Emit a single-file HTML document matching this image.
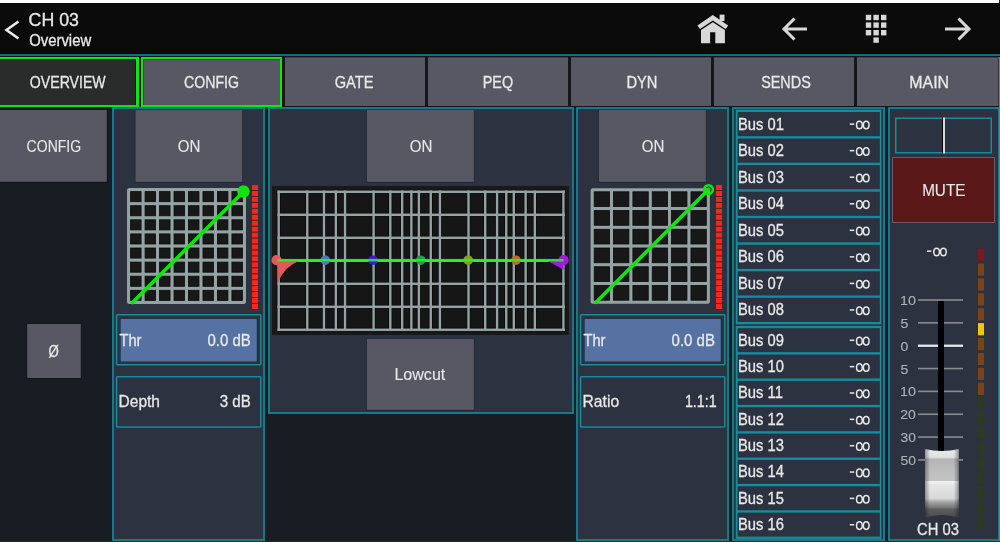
<!DOCTYPE html>
<html><head><meta charset="utf-8"><style>
html,body{margin:0;padding:0;width:1000px;height:542px;overflow:hidden;background:#181c23}
svg{display:block;font-family:"Liberation Sans",sans-serif}
</style></head><body>
<svg width="1000" height="542" viewBox="0 0 1000 542">
<rect x="0" y="0" width="1000" height="542" fill="#181c23" />
<rect x="0" y="0" width="999" height="3" fill="#ffffff" />
<rect x="0" y="541" width="1000" height="1" fill="#2b2b2b" />
<rect x="0" y="3" width="1000" height="50" fill="#0b0b0b" />
<rect x="0" y="53" width="1000" height="1" fill="#050208" />
<rect x="0" y="54" width="1000" height="2" fill="#0c7282" />
<rect x="0" y="56" width="1000" height="51" fill="#15171c" />
<polyline points="18.5,21.5 6.5,30 18.5,38.5" fill="none" stroke="#ececec" stroke-width="2.6"/>
<path d="M719.6,14.6 L724.5,14.6 L724.5,21 L719.6,21 Z" fill="#d8d8d8"/>
<path d="M712.8,15 L728.2,25.4 L725.6,29.1 L712.8,20.5 L700,29.1 L697.4,25.4 Z" fill="#d8d8d8"/>
<path d="M701,30.1 L712.8,22.2 L724.9,30.1 L724.9,43.3 L715.3,43.3 L715.3,32.2 L710.1,32.2 L710.1,43.3 L701,43.3 Z" fill="#d8d8d8"/>
<path d="M807,29 L784.5,29 M794.5,18.5 L784,29 L794.5,39.5" fill="none" stroke="#d8d8d8" stroke-width="3"/>
<path d="M945,29 L968.5,29 M958.5,18.5 L969,29 L958.5,39.5" fill="none" stroke="#d8d8d8" stroke-width="3"/>
<rect x="865.8" y="14.8" width="5.4" height="5.4" fill="#d8d8d8" />
<rect x="865.8" y="22.4" width="5.4" height="5.4" fill="#d8d8d8" />
<rect x="865.8" y="30.0" width="5.4" height="5.4" fill="#d8d8d8" />
<rect x="873.4" y="14.8" width="5.4" height="5.4" fill="#d8d8d8" />
<rect x="873.4" y="22.4" width="5.4" height="5.4" fill="#d8d8d8" />
<rect x="873.4" y="30.0" width="5.4" height="5.4" fill="#d8d8d8" />
<rect x="881.0" y="14.8" width="5.4" height="5.4" fill="#d8d8d8" />
<rect x="881.0" y="22.4" width="5.4" height="5.4" fill="#d8d8d8" />
<rect x="881.0" y="30.0" width="5.4" height="5.4" fill="#d8d8d8" />
<rect x="873.4" y="37.4" width="5.4" height="5.4" fill="#d8d8d8" />
<rect x="0" y="57" width="139" height="50" fill="#0ee60e" />
<rect x="0" y="59" width="136" height="46" fill="#1e0a24" />
<rect x="0" y="60" width="135" height="45" fill="#2a2c2c" />
<rect x="141" y="57" width="141" height="50" fill="#0ee60e" />
<rect x="143" y="59" width="137" height="46" fill="#3c2c4c" />
<rect x="144" y="60" width="136" height="45" fill="#585864" />
<rect x="285" y="57" width="140" height="49" fill="#585864" />
<rect x="285" y="57" width="140" height="1" fill="#403e4a" />
<rect x="285" y="58" width="140" height="1" fill="#5e5e6a" />
<rect x="428" y="57" width="140" height="49" fill="#585864" />
<rect x="428" y="57" width="140" height="1" fill="#403e4a" />
<rect x="428" y="58" width="140" height="1" fill="#5e5e6a" />
<rect x="571" y="57" width="140" height="49" fill="#585864" />
<rect x="571" y="57" width="140" height="1" fill="#403e4a" />
<rect x="571" y="58" width="140" height="1" fill="#5e5e6a" />
<rect x="714" y="57" width="140" height="49" fill="#585864" />
<rect x="714" y="57" width="140" height="1" fill="#403e4a" />
<rect x="714" y="58" width="140" height="1" fill="#5e5e6a" />
<rect x="857" y="57" width="141.5" height="49" fill="#585864" />
<rect x="857" y="57" width="141.5" height="1" fill="#403e4a" />
<rect x="857" y="58" width="141.5" height="1" fill="#5e5e6a" />
<rect x="0" y="110" width="107.8" height="73" fill="#12151b" />
<rect x="0" y="110" width="106.8" height="71.8" fill="#585864" />
<rect x="26.5" y="323.5" width="55" height="55.5" fill="#12151b" />
<rect x="27.2" y="324" width="53.6" height="54" fill="#585864" />
<rect x="112" y="107" width="153" height="434" fill="#127a8a" />
<rect x="114" y="109" width="149" height="430" fill="#2c3240" />
<rect x="134.8" y="110" width="108" height="73" fill="#252a36" />
<rect x="135.6" y="110" width="106.6" height="71.8" fill="#585864" />
<rect x="127" y="188" width="119" height="116" rx="2.5" fill="#93a2a2"/>
<rect x="130.60" y="191.60" width="10.47" height="10.10" fill="#181818" stroke="#0b0b0b" stroke-width="0.8"/>
<rect x="130.60" y="205.70" width="10.47" height="10.10" fill="#181818" stroke="#0b0b0b" stroke-width="0.8"/>
<rect x="130.60" y="219.80" width="10.47" height="10.10" fill="#181818" stroke="#0b0b0b" stroke-width="0.8"/>
<rect x="130.60" y="233.90" width="10.47" height="10.10" fill="#181818" stroke="#0b0b0b" stroke-width="0.8"/>
<rect x="130.60" y="248.00" width="10.47" height="10.10" fill="#181818" stroke="#0b0b0b" stroke-width="0.8"/>
<rect x="130.60" y="262.10" width="10.47" height="10.10" fill="#181818" stroke="#0b0b0b" stroke-width="0.8"/>
<rect x="130.60" y="276.20" width="10.47" height="10.10" fill="#181818" stroke="#0b0b0b" stroke-width="0.8"/>
<rect x="130.60" y="290.30" width="10.47" height="10.10" fill="#181818" stroke="#0b0b0b" stroke-width="0.8"/>
<rect x="145.07" y="191.60" width="10.47" height="10.10" fill="#181818" stroke="#0b0b0b" stroke-width="0.8"/>
<rect x="145.07" y="205.70" width="10.47" height="10.10" fill="#181818" stroke="#0b0b0b" stroke-width="0.8"/>
<rect x="145.07" y="219.80" width="10.47" height="10.10" fill="#181818" stroke="#0b0b0b" stroke-width="0.8"/>
<rect x="145.07" y="233.90" width="10.47" height="10.10" fill="#181818" stroke="#0b0b0b" stroke-width="0.8"/>
<rect x="145.07" y="248.00" width="10.47" height="10.10" fill="#181818" stroke="#0b0b0b" stroke-width="0.8"/>
<rect x="145.07" y="262.10" width="10.47" height="10.10" fill="#181818" stroke="#0b0b0b" stroke-width="0.8"/>
<rect x="145.07" y="276.20" width="10.47" height="10.10" fill="#181818" stroke="#0b0b0b" stroke-width="0.8"/>
<rect x="145.07" y="290.30" width="10.47" height="10.10" fill="#181818" stroke="#0b0b0b" stroke-width="0.8"/>
<rect x="159.55" y="191.60" width="10.47" height="10.10" fill="#181818" stroke="#0b0b0b" stroke-width="0.8"/>
<rect x="159.55" y="205.70" width="10.47" height="10.10" fill="#181818" stroke="#0b0b0b" stroke-width="0.8"/>
<rect x="159.55" y="219.80" width="10.47" height="10.10" fill="#181818" stroke="#0b0b0b" stroke-width="0.8"/>
<rect x="159.55" y="233.90" width="10.47" height="10.10" fill="#181818" stroke="#0b0b0b" stroke-width="0.8"/>
<rect x="159.55" y="248.00" width="10.47" height="10.10" fill="#181818" stroke="#0b0b0b" stroke-width="0.8"/>
<rect x="159.55" y="262.10" width="10.47" height="10.10" fill="#181818" stroke="#0b0b0b" stroke-width="0.8"/>
<rect x="159.55" y="276.20" width="10.47" height="10.10" fill="#181818" stroke="#0b0b0b" stroke-width="0.8"/>
<rect x="159.55" y="290.30" width="10.47" height="10.10" fill="#181818" stroke="#0b0b0b" stroke-width="0.8"/>
<rect x="174.03" y="191.60" width="10.47" height="10.10" fill="#181818" stroke="#0b0b0b" stroke-width="0.8"/>
<rect x="174.03" y="205.70" width="10.47" height="10.10" fill="#181818" stroke="#0b0b0b" stroke-width="0.8"/>
<rect x="174.03" y="219.80" width="10.47" height="10.10" fill="#181818" stroke="#0b0b0b" stroke-width="0.8"/>
<rect x="174.03" y="233.90" width="10.47" height="10.10" fill="#181818" stroke="#0b0b0b" stroke-width="0.8"/>
<rect x="174.03" y="248.00" width="10.47" height="10.10" fill="#181818" stroke="#0b0b0b" stroke-width="0.8"/>
<rect x="174.03" y="262.10" width="10.47" height="10.10" fill="#181818" stroke="#0b0b0b" stroke-width="0.8"/>
<rect x="174.03" y="276.20" width="10.47" height="10.10" fill="#181818" stroke="#0b0b0b" stroke-width="0.8"/>
<rect x="174.03" y="290.30" width="10.47" height="10.10" fill="#181818" stroke="#0b0b0b" stroke-width="0.8"/>
<rect x="188.50" y="191.60" width="10.47" height="10.10" fill="#181818" stroke="#0b0b0b" stroke-width="0.8"/>
<rect x="188.50" y="205.70" width="10.47" height="10.10" fill="#181818" stroke="#0b0b0b" stroke-width="0.8"/>
<rect x="188.50" y="219.80" width="10.47" height="10.10" fill="#181818" stroke="#0b0b0b" stroke-width="0.8"/>
<rect x="188.50" y="233.90" width="10.47" height="10.10" fill="#181818" stroke="#0b0b0b" stroke-width="0.8"/>
<rect x="188.50" y="248.00" width="10.47" height="10.10" fill="#181818" stroke="#0b0b0b" stroke-width="0.8"/>
<rect x="188.50" y="262.10" width="10.47" height="10.10" fill="#181818" stroke="#0b0b0b" stroke-width="0.8"/>
<rect x="188.50" y="276.20" width="10.47" height="10.10" fill="#181818" stroke="#0b0b0b" stroke-width="0.8"/>
<rect x="188.50" y="290.30" width="10.47" height="10.10" fill="#181818" stroke="#0b0b0b" stroke-width="0.8"/>
<rect x="202.97" y="191.60" width="10.47" height="10.10" fill="#181818" stroke="#0b0b0b" stroke-width="0.8"/>
<rect x="202.97" y="205.70" width="10.47" height="10.10" fill="#181818" stroke="#0b0b0b" stroke-width="0.8"/>
<rect x="202.97" y="219.80" width="10.47" height="10.10" fill="#181818" stroke="#0b0b0b" stroke-width="0.8"/>
<rect x="202.97" y="233.90" width="10.47" height="10.10" fill="#181818" stroke="#0b0b0b" stroke-width="0.8"/>
<rect x="202.97" y="248.00" width="10.47" height="10.10" fill="#181818" stroke="#0b0b0b" stroke-width="0.8"/>
<rect x="202.97" y="262.10" width="10.47" height="10.10" fill="#181818" stroke="#0b0b0b" stroke-width="0.8"/>
<rect x="202.97" y="276.20" width="10.47" height="10.10" fill="#181818" stroke="#0b0b0b" stroke-width="0.8"/>
<rect x="202.97" y="290.30" width="10.47" height="10.10" fill="#181818" stroke="#0b0b0b" stroke-width="0.8"/>
<rect x="217.45" y="191.60" width="10.47" height="10.10" fill="#181818" stroke="#0b0b0b" stroke-width="0.8"/>
<rect x="217.45" y="205.70" width="10.47" height="10.10" fill="#181818" stroke="#0b0b0b" stroke-width="0.8"/>
<rect x="217.45" y="219.80" width="10.47" height="10.10" fill="#181818" stroke="#0b0b0b" stroke-width="0.8"/>
<rect x="217.45" y="233.90" width="10.47" height="10.10" fill="#181818" stroke="#0b0b0b" stroke-width="0.8"/>
<rect x="217.45" y="248.00" width="10.47" height="10.10" fill="#181818" stroke="#0b0b0b" stroke-width="0.8"/>
<rect x="217.45" y="262.10" width="10.47" height="10.10" fill="#181818" stroke="#0b0b0b" stroke-width="0.8"/>
<rect x="217.45" y="276.20" width="10.47" height="10.10" fill="#181818" stroke="#0b0b0b" stroke-width="0.8"/>
<rect x="217.45" y="290.30" width="10.47" height="10.10" fill="#181818" stroke="#0b0b0b" stroke-width="0.8"/>
<rect x="231.92" y="191.60" width="10.47" height="10.10" fill="#181818" stroke="#0b0b0b" stroke-width="0.8"/>
<rect x="231.92" y="205.70" width="10.47" height="10.10" fill="#181818" stroke="#0b0b0b" stroke-width="0.8"/>
<rect x="231.92" y="219.80" width="10.47" height="10.10" fill="#181818" stroke="#0b0b0b" stroke-width="0.8"/>
<rect x="231.92" y="233.90" width="10.47" height="10.10" fill="#181818" stroke="#0b0b0b" stroke-width="0.8"/>
<rect x="231.92" y="248.00" width="10.47" height="10.10" fill="#181818" stroke="#0b0b0b" stroke-width="0.8"/>
<rect x="231.92" y="262.10" width="10.47" height="10.10" fill="#181818" stroke="#0b0b0b" stroke-width="0.8"/>
<rect x="231.92" y="276.20" width="10.47" height="10.10" fill="#181818" stroke="#0b0b0b" stroke-width="0.8"/>
<rect x="231.92" y="290.30" width="10.47" height="10.10" fill="#181818" stroke="#0b0b0b" stroke-width="0.8"/>
<line x1="132.5" y1="302.5" x2="244" y2="191.2" stroke="#0ee60e" stroke-width="3.6" stroke-linecap="round"/>
<circle cx="243.5" cy="191.5" r="6.2" fill="#0ee60e"/>
<rect x="252" y="185" width="6" height="124.95" fill="#2a2428" />
<rect x="252" y="185.0" width="6" height="5" fill="#ff2418" />
<rect x="252" y="190.95" width="6" height="5" fill="#ff2418" />
<rect x="252" y="196.9" width="6" height="5" fill="#ff2418" />
<rect x="252" y="202.85" width="6" height="5" fill="#ff2418" />
<rect x="252" y="208.8" width="6" height="5" fill="#ff2418" />
<rect x="252" y="214.75" width="6" height="5" fill="#ff2418" />
<rect x="252" y="220.7" width="6" height="5" fill="#ff2418" />
<rect x="252" y="226.65" width="6" height="5" fill="#ff2418" />
<rect x="252" y="232.6" width="6" height="5" fill="#ff2418" />
<rect x="252" y="238.55" width="6" height="5" fill="#ff2418" />
<rect x="252" y="244.5" width="6" height="5" fill="#ff2418" />
<rect x="252" y="250.45" width="6" height="5" fill="#ff2418" />
<rect x="252" y="256.4" width="6" height="5" fill="#ff2418" />
<rect x="252" y="262.35" width="6" height="5" fill="#ff2418" />
<rect x="252" y="268.3" width="6" height="5" fill="#ff2418" />
<rect x="252" y="274.25" width="6" height="5" fill="#ff2418" />
<rect x="252" y="280.2" width="6" height="5" fill="#ff2418" />
<rect x="252" y="286.15" width="6" height="5" fill="#ff2418" />
<rect x="252" y="292.1" width="6" height="5" fill="#ff2418" />
<rect x="252" y="298.05" width="6" height="5" fill="#ff2418" />
<rect x="252" y="304.0" width="6" height="5" fill="#ff2418" />
<rect x="115.8" y="314" width="145.8" height="51.5" rx="1.5" fill="#168c9e"/>
<rect x="117.3" y="315.5" width="142.8" height="48.5" fill="#2c3240"/>
<rect x="120.1" y="318.2" width="137.20000000000002" height="43.5" fill="#1c2030"/>
<rect x="120.6" y="318.8" width="136.20000000000002" height="42.7" fill="#5672a3"/>
<rect x="115.8" y="376" width="145.8" height="51.8" rx="1.5" fill="#168c9e"/>
<rect x="117.3" y="377.5" width="142.8" height="48.8" fill="#2c3240"/>
<rect x="268" y="107" width="306" height="307" fill="#127a8a" />
<rect x="270" y="109" width="302" height="303" fill="#2c3240" />
<rect x="366.3" y="110" width="108.2" height="73" fill="#252a36" />
<rect x="367" y="110" width="106.8" height="71.8" fill="#585864" />
<rect x="272" y="186" width="297" height="149" fill="#191919" />
<rect x="277.5" y="190.5" width="287.5" height="140.5" fill="#161616"/>
<rect x="276.70" y="190.5" width="4.0" height="140.5" fill="#0a0a0a"/>
<rect x="305.27" y="190.5" width="4.0" height="140.5" fill="#0a0a0a"/>
<rect x="321.98" y="190.5" width="4.0" height="140.5" fill="#0a0a0a"/>
<rect x="333.84" y="190.5" width="4.0" height="140.5" fill="#0a0a0a"/>
<rect x="343.03" y="190.5" width="4.0" height="140.5" fill="#0a0a0a"/>
<rect x="371.60" y="190.5" width="4.0" height="140.5" fill="#0a0a0a"/>
<rect x="388.31" y="190.5" width="4.0" height="140.5" fill="#0a0a0a"/>
<rect x="400.17" y="190.5" width="4.0" height="140.5" fill="#0a0a0a"/>
<rect x="409.36" y="190.5" width="4.0" height="140.5" fill="#0a0a0a"/>
<rect x="416.88" y="190.5" width="4.0" height="140.5" fill="#0a0a0a"/>
<rect x="428.74" y="190.5" width="4.0" height="140.5" fill="#0a0a0a"/>
<rect x="437.93" y="190.5" width="4.0" height="140.5" fill="#0a0a0a"/>
<rect x="466.50" y="190.5" width="4.0" height="140.5" fill="#0a0a0a"/>
<rect x="483.21" y="190.5" width="4.0" height="140.5" fill="#0a0a0a"/>
<rect x="495.07" y="190.5" width="4.0" height="140.5" fill="#0a0a0a"/>
<rect x="504.26" y="190.5" width="4.0" height="140.5" fill="#0a0a0a"/>
<rect x="511.78" y="190.5" width="4.0" height="140.5" fill="#0a0a0a"/>
<rect x="523.64" y="190.5" width="4.0" height="140.5" fill="#0a0a0a"/>
<rect x="532.83" y="190.5" width="4.0" height="140.5" fill="#0a0a0a"/>
<rect x="561.40" y="190.5" width="4.0" height="140.5" fill="#0a0a0a"/>
<rect x="277.5" y="189.80" width="287.5" height="4.0" fill="#0a0a0a"/>
<rect x="277.5" y="212.80" width="287.5" height="4.0" fill="#0a0a0a"/>
<rect x="277.5" y="235.80" width="287.5" height="4.0" fill="#0a0a0a"/>
<rect x="277.5" y="258.80" width="287.5" height="4.0" fill="#0a0a0a"/>
<rect x="277.5" y="281.80" width="287.5" height="4.0" fill="#0a0a0a"/>
<rect x="277.5" y="304.80" width="287.5" height="4.0" fill="#0a0a0a"/>
<rect x="277.5" y="327.80" width="287.5" height="4.0" fill="#0a0a0a"/>
<rect x="277.50" y="190.5" width="2.4" height="140.5" fill="#93a2a2"/>
<rect x="306.07" y="190.5" width="2.4" height="140.5" fill="#93a2a2"/>
<rect x="322.78" y="190.5" width="2.4" height="140.5" fill="#93a2a2"/>
<rect x="334.64" y="190.5" width="2.4" height="140.5" fill="#93a2a2"/>
<rect x="343.83" y="190.5" width="2.4" height="140.5" fill="#93a2a2"/>
<rect x="372.40" y="190.5" width="2.4" height="140.5" fill="#93a2a2"/>
<rect x="389.11" y="190.5" width="2.4" height="140.5" fill="#93a2a2"/>
<rect x="400.97" y="190.5" width="2.4" height="140.5" fill="#93a2a2"/>
<rect x="410.16" y="190.5" width="2.4" height="140.5" fill="#93a2a2"/>
<rect x="417.68" y="190.5" width="2.4" height="140.5" fill="#93a2a2"/>
<rect x="429.54" y="190.5" width="2.4" height="140.5" fill="#93a2a2"/>
<rect x="438.73" y="190.5" width="2.4" height="140.5" fill="#93a2a2"/>
<rect x="467.30" y="190.5" width="2.4" height="140.5" fill="#93a2a2"/>
<rect x="484.01" y="190.5" width="2.4" height="140.5" fill="#93a2a2"/>
<rect x="495.87" y="190.5" width="2.4" height="140.5" fill="#93a2a2"/>
<rect x="505.06" y="190.5" width="2.4" height="140.5" fill="#93a2a2"/>
<rect x="512.58" y="190.5" width="2.4" height="140.5" fill="#93a2a2"/>
<rect x="524.44" y="190.5" width="2.4" height="140.5" fill="#93a2a2"/>
<rect x="533.63" y="190.5" width="2.4" height="140.5" fill="#93a2a2"/>
<rect x="562.20" y="190.5" width="2.4" height="140.5" fill="#93a2a2"/>
<rect x="277.5" y="190.55" width="287.5" height="2.5" fill="#93a2a2"/>
<rect x="277.5" y="213.55" width="287.5" height="2.5" fill="#93a2a2"/>
<rect x="277.5" y="236.55" width="287.5" height="2.5" fill="#93a2a2"/>
<rect x="277.5" y="259.55" width="287.5" height="2.5" fill="#93a2a2"/>
<rect x="277.5" y="282.55" width="287.5" height="2.5" fill="#93a2a2"/>
<rect x="277.5" y="305.55" width="287.5" height="2.5" fill="#93a2a2"/>
<rect x="277.5" y="328.55" width="287.5" height="2.5" fill="#93a2a2"/>
<path d="M277.5,259.5 L299,259.5 L298.5,261.3 Q285,266 277.5,283 Z" fill="#e05a5a"/>
<path d="M546,260.5 L563.5,260.5 L563.5,270 C557,266 551,262.5 546,260.5 Z" fill="#a418e0"/>
<circle cx="276.6" cy="260.2" r="5.1" fill="#e05a5a" />
<circle cx="325.3" cy="260.2" r="4.8" fill="#4a74c4" />
<circle cx="373" cy="260.2" r="4.8" fill="#3c14e4" />
<circle cx="420.8" cy="260.2" r="4.8" fill="#1e9e3c" />
<circle cx="468.2" cy="260.2" r="4.8" fill="#8c9c1c" />
<circle cx="516" cy="260.2" r="4.8" fill="#c46428" />
<circle cx="563.6" cy="260.2" r="5.1" fill="#a418e0" />
<rect x="277.5" y="258.9" width="286" height="2.6" fill="#2af02a" fill-opacity="0.88"/>
<rect x="366.3" y="338.5" width="108.2" height="72.3" fill="#252a36" />
<rect x="367" y="339" width="106.8" height="70.8" fill="#585864" />
<rect x="576" y="107" width="153" height="434" fill="#127a8a" />
<rect x="578" y="109" width="149" height="430" fill="#2c3240" />
<rect x="598.3" y="110" width="108.2" height="73" fill="#252a36" />
<rect x="599" y="110" width="106.8" height="71.8" fill="#585864" />
<rect x="590.6" y="188.2" width="119.3" height="115.6" rx="2.5" fill="#93a2a2"/>
<rect x="594.20" y="191.80" width="15.35" height="14.73" fill="#181818" stroke="#0b0b0b" stroke-width="0.8"/>
<rect x="594.20" y="210.53" width="15.35" height="14.73" fill="#181818" stroke="#0b0b0b" stroke-width="0.8"/>
<rect x="594.20" y="229.27" width="15.35" height="14.73" fill="#181818" stroke="#0b0b0b" stroke-width="0.8"/>
<rect x="594.20" y="248.00" width="15.35" height="14.73" fill="#181818" stroke="#0b0b0b" stroke-width="0.8"/>
<rect x="594.20" y="266.73" width="15.35" height="14.73" fill="#181818" stroke="#0b0b0b" stroke-width="0.8"/>
<rect x="594.20" y="285.47" width="15.35" height="14.73" fill="#181818" stroke="#0b0b0b" stroke-width="0.8"/>
<rect x="613.55" y="191.80" width="15.35" height="14.73" fill="#181818" stroke="#0b0b0b" stroke-width="0.8"/>
<rect x="613.55" y="210.53" width="15.35" height="14.73" fill="#181818" stroke="#0b0b0b" stroke-width="0.8"/>
<rect x="613.55" y="229.27" width="15.35" height="14.73" fill="#181818" stroke="#0b0b0b" stroke-width="0.8"/>
<rect x="613.55" y="248.00" width="15.35" height="14.73" fill="#181818" stroke="#0b0b0b" stroke-width="0.8"/>
<rect x="613.55" y="266.73" width="15.35" height="14.73" fill="#181818" stroke="#0b0b0b" stroke-width="0.8"/>
<rect x="613.55" y="285.47" width="15.35" height="14.73" fill="#181818" stroke="#0b0b0b" stroke-width="0.8"/>
<rect x="632.90" y="191.80" width="15.35" height="14.73" fill="#181818" stroke="#0b0b0b" stroke-width="0.8"/>
<rect x="632.90" y="210.53" width="15.35" height="14.73" fill="#181818" stroke="#0b0b0b" stroke-width="0.8"/>
<rect x="632.90" y="229.27" width="15.35" height="14.73" fill="#181818" stroke="#0b0b0b" stroke-width="0.8"/>
<rect x="632.90" y="248.00" width="15.35" height="14.73" fill="#181818" stroke="#0b0b0b" stroke-width="0.8"/>
<rect x="632.90" y="266.73" width="15.35" height="14.73" fill="#181818" stroke="#0b0b0b" stroke-width="0.8"/>
<rect x="632.90" y="285.47" width="15.35" height="14.73" fill="#181818" stroke="#0b0b0b" stroke-width="0.8"/>
<rect x="652.25" y="191.80" width="15.35" height="14.73" fill="#181818" stroke="#0b0b0b" stroke-width="0.8"/>
<rect x="652.25" y="210.53" width="15.35" height="14.73" fill="#181818" stroke="#0b0b0b" stroke-width="0.8"/>
<rect x="652.25" y="229.27" width="15.35" height="14.73" fill="#181818" stroke="#0b0b0b" stroke-width="0.8"/>
<rect x="652.25" y="248.00" width="15.35" height="14.73" fill="#181818" stroke="#0b0b0b" stroke-width="0.8"/>
<rect x="652.25" y="266.73" width="15.35" height="14.73" fill="#181818" stroke="#0b0b0b" stroke-width="0.8"/>
<rect x="652.25" y="285.47" width="15.35" height="14.73" fill="#181818" stroke="#0b0b0b" stroke-width="0.8"/>
<rect x="671.60" y="191.80" width="15.35" height="14.73" fill="#181818" stroke="#0b0b0b" stroke-width="0.8"/>
<rect x="671.60" y="210.53" width="15.35" height="14.73" fill="#181818" stroke="#0b0b0b" stroke-width="0.8"/>
<rect x="671.60" y="229.27" width="15.35" height="14.73" fill="#181818" stroke="#0b0b0b" stroke-width="0.8"/>
<rect x="671.60" y="248.00" width="15.35" height="14.73" fill="#181818" stroke="#0b0b0b" stroke-width="0.8"/>
<rect x="671.60" y="266.73" width="15.35" height="14.73" fill="#181818" stroke="#0b0b0b" stroke-width="0.8"/>
<rect x="671.60" y="285.47" width="15.35" height="14.73" fill="#181818" stroke="#0b0b0b" stroke-width="0.8"/>
<rect x="690.95" y="191.80" width="15.35" height="14.73" fill="#181818" stroke="#0b0b0b" stroke-width="0.8"/>
<rect x="690.95" y="210.53" width="15.35" height="14.73" fill="#181818" stroke="#0b0b0b" stroke-width="0.8"/>
<rect x="690.95" y="229.27" width="15.35" height="14.73" fill="#181818" stroke="#0b0b0b" stroke-width="0.8"/>
<rect x="690.95" y="248.00" width="15.35" height="14.73" fill="#181818" stroke="#0b0b0b" stroke-width="0.8"/>
<rect x="690.95" y="266.73" width="15.35" height="14.73" fill="#181818" stroke="#0b0b0b" stroke-width="0.8"/>
<rect x="690.95" y="285.47" width="15.35" height="14.73" fill="#181818" stroke="#0b0b0b" stroke-width="0.8"/>
<line x1="596.1" y1="302.29999999999995" x2="708.5" y2="189.5" stroke="#0ee60e" stroke-width="3.6" stroke-linecap="round"/>
<circle cx="708.5" cy="189.5" r="4.3" fill="none" stroke="#0ee60e" stroke-width="2.6"/>
<rect x="716" y="185" width="6" height="124.95" fill="#2a2428" />
<rect x="716" y="185.0" width="6" height="5" fill="#ff2418" />
<rect x="716" y="190.95" width="6" height="5" fill="#ff2418" />
<rect x="716" y="196.9" width="6" height="5" fill="#ff2418" />
<rect x="716" y="202.85" width="6" height="5" fill="#ff2418" />
<rect x="716" y="208.8" width="6" height="5" fill="#ff2418" />
<rect x="716" y="214.75" width="6" height="5" fill="#ff2418" />
<rect x="716" y="220.7" width="6" height="5" fill="#ff2418" />
<rect x="716" y="226.65" width="6" height="5" fill="#ff2418" />
<rect x="716" y="232.6" width="6" height="5" fill="#ff2418" />
<rect x="716" y="238.55" width="6" height="5" fill="#ff2418" />
<rect x="716" y="244.5" width="6" height="5" fill="#ff2418" />
<rect x="716" y="250.45" width="6" height="5" fill="#ff2418" />
<rect x="716" y="256.4" width="6" height="5" fill="#ff2418" />
<rect x="716" y="262.35" width="6" height="5" fill="#ff2418" />
<rect x="716" y="268.3" width="6" height="5" fill="#ff2418" />
<rect x="716" y="274.25" width="6" height="5" fill="#ff2418" />
<rect x="716" y="280.2" width="6" height="5" fill="#ff2418" />
<rect x="716" y="286.15" width="6" height="5" fill="#ff2418" />
<rect x="716" y="292.1" width="6" height="5" fill="#ff2418" />
<rect x="716" y="298.05" width="6" height="5" fill="#ff2418" />
<rect x="716" y="304.0" width="6" height="5" fill="#ff2418" />
<rect x="579.8" y="314" width="145.8" height="51.5" rx="1.5" fill="#168c9e"/>
<rect x="581.3" y="315.5" width="142.8" height="48.5" fill="#2c3240"/>
<rect x="584.0999999999999" y="318.2" width="137.20000000000002" height="43.5" fill="#1c2030"/>
<rect x="584.5999999999999" y="318.8" width="136.20000000000002" height="42.7" fill="#5672a3"/>
<rect x="579.8" y="376" width="145.8" height="51.8" rx="1.5" fill="#168c9e"/>
<rect x="581.3" y="377.5" width="142.8" height="48.8" fill="#2c3240"/>
<rect x="732" y="107" width="153" height="434" fill="#127a8a" />
<rect x="734" y="109" width="149" height="430" fill="#2c3240" />
<rect x="735.8" y="109.70" width="145.6" height="214.60" fill="#168c9e"/>
<rect x="737.6" y="112.00" width="142.2" height="24.15" fill="#2c3240"/>
<rect x="849.8" y="123.35" width="4.4" height="1.5" fill="#e8e8e8"/>
<ellipse cx="859.40" cy="124.95" rx="2.85" ry="3.8" fill="none" stroke="#e8e8e8" stroke-width="1.5"/>
<ellipse cx="866.20" cy="124.95" rx="2.85" ry="3.8" fill="none" stroke="#e8e8e8" stroke-width="1.5"/>
<rect x="737.6" y="138.55" width="142.2" height="24.15" fill="#2c3240"/>
<rect x="849.8" y="149.90" width="4.4" height="1.5" fill="#e8e8e8"/>
<ellipse cx="859.40" cy="151.50" rx="2.85" ry="3.8" fill="none" stroke="#e8e8e8" stroke-width="1.5"/>
<ellipse cx="866.20" cy="151.50" rx="2.85" ry="3.8" fill="none" stroke="#e8e8e8" stroke-width="1.5"/>
<rect x="737.6" y="165.10" width="142.2" height="24.15" fill="#2c3240"/>
<rect x="849.8" y="176.45" width="4.4" height="1.5" fill="#e8e8e8"/>
<ellipse cx="859.40" cy="178.05" rx="2.85" ry="3.8" fill="none" stroke="#e8e8e8" stroke-width="1.5"/>
<ellipse cx="866.20" cy="178.05" rx="2.85" ry="3.8" fill="none" stroke="#e8e8e8" stroke-width="1.5"/>
<rect x="737.6" y="191.65" width="142.2" height="24.15" fill="#2c3240"/>
<rect x="849.8" y="203.00" width="4.4" height="1.5" fill="#e8e8e8"/>
<ellipse cx="859.40" cy="204.60" rx="2.85" ry="3.8" fill="none" stroke="#e8e8e8" stroke-width="1.5"/>
<ellipse cx="866.20" cy="204.60" rx="2.85" ry="3.8" fill="none" stroke="#e8e8e8" stroke-width="1.5"/>
<rect x="737.6" y="218.20" width="142.2" height="24.15" fill="#2c3240"/>
<rect x="849.8" y="229.55" width="4.4" height="1.5" fill="#e8e8e8"/>
<ellipse cx="859.40" cy="231.15" rx="2.85" ry="3.8" fill="none" stroke="#e8e8e8" stroke-width="1.5"/>
<ellipse cx="866.20" cy="231.15" rx="2.85" ry="3.8" fill="none" stroke="#e8e8e8" stroke-width="1.5"/>
<rect x="737.6" y="244.75" width="142.2" height="24.15" fill="#2c3240"/>
<rect x="849.8" y="256.10" width="4.4" height="1.5" fill="#e8e8e8"/>
<ellipse cx="859.40" cy="257.70" rx="2.85" ry="3.8" fill="none" stroke="#e8e8e8" stroke-width="1.5"/>
<ellipse cx="866.20" cy="257.70" rx="2.85" ry="3.8" fill="none" stroke="#e8e8e8" stroke-width="1.5"/>
<rect x="737.6" y="271.30" width="142.2" height="24.15" fill="#2c3240"/>
<rect x="849.8" y="282.65" width="4.4" height="1.5" fill="#e8e8e8"/>
<ellipse cx="859.40" cy="284.25" rx="2.85" ry="3.8" fill="none" stroke="#e8e8e8" stroke-width="1.5"/>
<ellipse cx="866.20" cy="284.25" rx="2.85" ry="3.8" fill="none" stroke="#e8e8e8" stroke-width="1.5"/>
<rect x="737.6" y="297.85" width="142.2" height="24.15" fill="#2c3240"/>
<rect x="849.8" y="309.20" width="4.4" height="1.5" fill="#e8e8e8"/>
<ellipse cx="859.40" cy="310.80" rx="2.85" ry="3.8" fill="none" stroke="#e8e8e8" stroke-width="1.5"/>
<ellipse cx="866.20" cy="310.80" rx="2.85" ry="3.8" fill="none" stroke="#e8e8e8" stroke-width="1.5"/>
<rect x="735.8" y="325.90" width="145.6" height="213.00" fill="#168c9e"/>
<rect x="737.6" y="328.20" width="142.2" height="23.95" fill="#2c3240"/>
<rect x="849.8" y="339.55" width="4.4" height="1.5" fill="#e8e8e8"/>
<ellipse cx="859.40" cy="341.15" rx="2.85" ry="3.8" fill="none" stroke="#e8e8e8" stroke-width="1.5"/>
<ellipse cx="866.20" cy="341.15" rx="2.85" ry="3.8" fill="none" stroke="#e8e8e8" stroke-width="1.5"/>
<rect x="737.6" y="354.55" width="142.2" height="23.95" fill="#2c3240"/>
<rect x="849.8" y="365.90" width="4.4" height="1.5" fill="#e8e8e8"/>
<ellipse cx="859.40" cy="367.50" rx="2.85" ry="3.8" fill="none" stroke="#e8e8e8" stroke-width="1.5"/>
<ellipse cx="866.20" cy="367.50" rx="2.85" ry="3.8" fill="none" stroke="#e8e8e8" stroke-width="1.5"/>
<rect x="737.6" y="380.90" width="142.2" height="23.95" fill="#2c3240"/>
<rect x="849.8" y="392.25" width="4.4" height="1.5" fill="#e8e8e8"/>
<ellipse cx="859.40" cy="393.85" rx="2.85" ry="3.8" fill="none" stroke="#e8e8e8" stroke-width="1.5"/>
<ellipse cx="866.20" cy="393.85" rx="2.85" ry="3.8" fill="none" stroke="#e8e8e8" stroke-width="1.5"/>
<rect x="737.6" y="407.25" width="142.2" height="23.95" fill="#2c3240"/>
<rect x="849.8" y="418.60" width="4.4" height="1.5" fill="#e8e8e8"/>
<ellipse cx="859.40" cy="420.20" rx="2.85" ry="3.8" fill="none" stroke="#e8e8e8" stroke-width="1.5"/>
<ellipse cx="866.20" cy="420.20" rx="2.85" ry="3.8" fill="none" stroke="#e8e8e8" stroke-width="1.5"/>
<rect x="737.6" y="433.60" width="142.2" height="23.95" fill="#2c3240"/>
<rect x="849.8" y="444.95" width="4.4" height="1.5" fill="#e8e8e8"/>
<ellipse cx="859.40" cy="446.55" rx="2.85" ry="3.8" fill="none" stroke="#e8e8e8" stroke-width="1.5"/>
<ellipse cx="866.20" cy="446.55" rx="2.85" ry="3.8" fill="none" stroke="#e8e8e8" stroke-width="1.5"/>
<rect x="737.6" y="459.95" width="142.2" height="23.95" fill="#2c3240"/>
<rect x="849.8" y="471.30" width="4.4" height="1.5" fill="#e8e8e8"/>
<ellipse cx="859.40" cy="472.90" rx="2.85" ry="3.8" fill="none" stroke="#e8e8e8" stroke-width="1.5"/>
<ellipse cx="866.20" cy="472.90" rx="2.85" ry="3.8" fill="none" stroke="#e8e8e8" stroke-width="1.5"/>
<rect x="737.6" y="486.30" width="142.2" height="23.95" fill="#2c3240"/>
<rect x="849.8" y="497.65" width="4.4" height="1.5" fill="#e8e8e8"/>
<ellipse cx="859.40" cy="499.25" rx="2.85" ry="3.8" fill="none" stroke="#e8e8e8" stroke-width="1.5"/>
<ellipse cx="866.20" cy="499.25" rx="2.85" ry="3.8" fill="none" stroke="#e8e8e8" stroke-width="1.5"/>
<rect x="737.6" y="512.65" width="142.2" height="23.95" fill="#2c3240"/>
<rect x="849.8" y="524.00" width="4.4" height="1.5" fill="#e8e8e8"/>
<ellipse cx="859.40" cy="525.60" rx="2.85" ry="3.8" fill="none" stroke="#e8e8e8" stroke-width="1.5"/>
<ellipse cx="866.20" cy="525.60" rx="2.85" ry="3.8" fill="none" stroke="#e8e8e8" stroke-width="1.5"/>
<rect x="888" y="107" width="112" height="434" fill="#127a8a" />
<rect x="890" y="109" width="108" height="430" fill="#2c3240" />
<rect x="999" y="57" width="1" height="484" fill="#7e7a80" />
<rect x="895.75" y="118.25" width="95.5" height="34.5" fill="none" stroke="#168c9e" stroke-width="1.5"/>
<rect x="942" y="117.5" width="1" height="36" fill="#05050a" />
<rect x="943" y="117.5" width="2" height="36" fill="#d8d8d8" />
<rect x="892" y="157" width="103" height="66" fill="#6a5c62" />
<rect x="893" y="158" width="101" height="64" fill="#5a1818" />
<rect x="927" y="250.40" width="4.4" height="1.5" fill="#e8e8e8"/>
<ellipse cx="936.60" cy="252.00" rx="2.85" ry="3.8" fill="none" stroke="#e8e8e8" stroke-width="1.5"/>
<ellipse cx="943.40" cy="252.00" rx="2.85" ry="3.8" fill="none" stroke="#e8e8e8" stroke-width="1.5"/>
<rect x="918" y="299.2" width="45" height="1.6" fill="#8a8c8e" />
<rect x="918" y="322.05" width="45" height="1.6" fill="#8a8c8e" />
<rect x="918" y="344.2" width="45" height="3" fill="#0a0a20" />
<rect x="918" y="344.5" width="45" height="2.4" fill="#e8e8f0" />
<rect x="918" y="367.75" width="45" height="1.6" fill="#8a8c8e" />
<rect x="918" y="390.6" width="45" height="1.6" fill="#8a8c8e" />
<rect x="918" y="413.45" width="45" height="1.6" fill="#8a8c8e" />
<rect x="918" y="436.3" width="45" height="1.6" fill="#8a8c8e" />
<rect x="918" y="459.15" width="45" height="1.6" fill="#8a8c8e" />
<rect x="938" y="301" width="6" height="150" fill="#000000" />
<rect x="978" y="248.6" width="6" height="12.2" fill="#7a1a1a" />
<rect x="978" y="263.5" width="6" height="12.2" fill="#7a4418" />
<rect x="978" y="278.4" width="6" height="12.2" fill="#7a4418" />
<rect x="978" y="293.3" width="6" height="12.2" fill="#7a4418" />
<rect x="978" y="308.2" width="6" height="12.2" fill="#7a4418" />
<rect x="978" y="323.1" width="6" height="12.2" fill="#f0c810" />
<rect x="978" y="338.0" width="6" height="12.2" fill="#7a4418" />
<rect x="978" y="352.9" width="6" height="12.2" fill="#7a4418" />
<rect x="978" y="367.8" width="6" height="12.2" fill="#7a4418" />
<rect x="978" y="382.7" width="6" height="12.2" fill="#7a4418" />
<rect x="978" y="397.6" width="6" height="12.2" fill="#2c3a1e" />
<rect x="978" y="412.5" width="6" height="12.2" fill="#2c3a1e" />
<rect x="978" y="427.4" width="6" height="12.2" fill="#2c3a1e" />
<rect x="978" y="442.3" width="6" height="12.2" fill="#2c3a1e" />
<rect x="978" y="457.2" width="6" height="12.2" fill="#2c3a1e" />
<rect x="978" y="472.1" width="6" height="12.2" fill="#2c3a1e" />
<rect x="978" y="487.0" width="6" height="12.2" fill="#2c3a1e" />
<rect x="978" y="501.9" width="6" height="12.2" fill="#2c3a1e" />
<rect x="978" y="516.8" width="6" height="12.2" fill="#2c3a1e" />
<defs><linearGradient id="kg" x1="0" y1="0" x2="0" y2="1">
<stop offset="0" stop-color="#c8c8c8"/><stop offset="0.03" stop-color="#e8e8e8"/>
<stop offset="0.12" stop-color="#e0e0e0"/><stop offset="0.15" stop-color="#b4b4b4"/>
<stop offset="0.3" stop-color="#bdbdbd"/><stop offset="0.46" stop-color="#c2c2c2"/><stop offset="0.475" stop-color="#f4f4f4"/>
<stop offset="0.52" stop-color="#e6e6e6"/><stop offset="0.72" stop-color="#d8d8d8"/>
<stop offset="0.77" stop-color="#a8a8a8"/><stop offset="0.85" stop-color="#7a7a7a"/>
<stop offset="0.88" stop-color="#5e5e5e"/><stop offset="1" stop-color="#4c4c4c"/></linearGradient>
<linearGradient id="kh" x1="0" y1="0" x2="1" y2="0">
<stop offset="0" stop-color="#000" stop-opacity="0.35"/><stop offset="0.15" stop-color="#000" stop-opacity="0"/>
<stop offset="0.85" stop-color="#000" stop-opacity="0"/><stop offset="1" stop-color="#000" stop-opacity="0.35"/></linearGradient></defs>
<path d="M925,449 Q941.9,453 958.8,449 L958.8,517.5 Q941.9,512.5 925,517.5 Z" fill="url(#kg)"/>
<path d="M925,449 Q941.9,453 958.8,449 L958.8,517.5 Q941.9,512.5 925,517.5 Z" fill="url(#kh)"/>
<g style="will-change:transform"><text transform="translate(28.60,25.60) scale(1.0157,1)" font-size="17.5" fill="#e8e8e8" stroke="#e8e8e8" stroke-width="0.3">CH 03</text>
<text transform="translate(29.20,45.60) scale(0.9293,1)" font-size="16" fill="#e8e8e8" stroke="#e8e8e8" stroke-width="0.3">Overview</text>
<text transform="translate(29.83,87.90) scale(0.8729,1)" font-size="16.2" fill="#e8e8e8" stroke="#e8e8e8" stroke-width="0.3">OVERVIEW</text>
<text transform="translate(184.08,87.90) scale(0.8727,1)" font-size="16.2" fill="#e8e8e8" stroke="#e8e8e8" stroke-width="0.3">CONFIG</text>
<text transform="translate(334.66,87.90) scale(0.9038,1)" font-size="16.2" fill="#e8e8e8" stroke="#e8e8e8" stroke-width="0.3">GATE</text>
<text transform="translate(482.72,87.90) scale(0.8908,1)" font-size="16.2" fill="#e8e8e8" stroke="#e8e8e8" stroke-width="0.3">PEQ</text>
<text transform="translate(626.40,87.90) scale(0.9064,1)" font-size="16.2" fill="#e8e8e8" stroke="#e8e8e8" stroke-width="0.3">DYN</text>
<text transform="translate(761.14,87.90) scale(0.8908,1)" font-size="16.2" fill="#e8e8e8" stroke="#e8e8e8" stroke-width="0.3">SENDS</text>
<text transform="translate(909.29,87.90) scale(0.9828,1)" font-size="16.2" fill="#e8e8e8" stroke="#e8e8e8" stroke-width="0.3">MAIN</text>
<text transform="translate(26.59,151.60) scale(0.8367,1)" font-size="16.8" fill="#e8e8e8" stroke="#e8e8e8" stroke-width="0.12">CONFIG</text>
<text transform="translate(48.44,357.20) scale(0.8281,1)" font-size="16" fill="#e8e8e8" stroke="#e8e8e8" stroke-width="0.3">Ø</text>
<text transform="translate(177.78,151.80) scale(0.8987,1)" font-size="16.8" fill="#e8e8e8" stroke="#e8e8e8" stroke-width="0.12">ON</text>
<text transform="translate(119.47,346.00) scale(0.8719,1)" font-size="16.8" fill="#e8e8e8" stroke="#e8e8e8" stroke-width="0.3">Thr</text>
<text transform="translate(207.41,346.00) scale(0.8931,1)" font-size="16.8" fill="#e8e8e8" stroke="#e8e8e8" stroke-width="0.3">0.0 dB</text>
<text transform="translate(118.52,407.30) scale(0.9254,1)" font-size="16.8" fill="#e8e8e8" stroke="#e8e8e8" stroke-width="0.3">Depth</text>
<text transform="translate(219.72,407.30) scale(0.8991,1)" font-size="16.8" fill="#e8e8e8" stroke="#e8e8e8" stroke-width="0.3">3 dB</text>
<text transform="translate(409.78,151.80) scale(0.8987,1)" font-size="16.8" fill="#e8e8e8" stroke="#e8e8e8" stroke-width="0.12">ON</text>
<text transform="translate(394.38,379.80) scale(0.9569,1)" font-size="16.8" fill="#e8e8e8" stroke="#e8e8e8" stroke-width="0.12">Lowcut</text>
<text transform="translate(641.78,151.80) scale(0.8987,1)" font-size="16.8" fill="#e8e8e8" stroke="#e8e8e8" stroke-width="0.12">ON</text>
<text transform="translate(583.47,346.00) scale(0.8719,1)" font-size="16.8" fill="#e8e8e8" stroke="#e8e8e8" stroke-width="0.3">Thr</text>
<text transform="translate(671.61,346.00) scale(0.8931,1)" font-size="16.8" fill="#e8e8e8" stroke="#e8e8e8" stroke-width="0.3">0.0 dB</text>
<text transform="translate(582.51,407.20) scale(0.9344,1)" font-size="16.8" fill="#e8e8e8" stroke="#e8e8e8" stroke-width="0.3">Ratio</text>
<text transform="translate(684.91,407.20) scale(0.8507,1)" font-size="16.8" fill="#e8e8e8" stroke="#e8e8e8" stroke-width="0.3">1.1:1</text>
<text transform="translate(737.99,129.50) scale(0.8800,1)" font-size="16.8" fill="#e8e8e8" stroke="#e8e8e8" stroke-width="0.3">Bus 01</text>
<text transform="translate(737.99,156.05) scale(0.8800,1)" font-size="16.8" fill="#e8e8e8" stroke="#e8e8e8" stroke-width="0.3">Bus 02</text>
<text transform="translate(737.99,182.60) scale(0.8800,1)" font-size="16.8" fill="#e8e8e8" stroke="#e8e8e8" stroke-width="0.3">Bus 03</text>
<text transform="translate(737.99,209.15) scale(0.8800,1)" font-size="16.8" fill="#e8e8e8" stroke="#e8e8e8" stroke-width="0.3">Bus 04</text>
<text transform="translate(737.99,235.70) scale(0.8800,1)" font-size="16.8" fill="#e8e8e8" stroke="#e8e8e8" stroke-width="0.3">Bus 05</text>
<text transform="translate(737.99,262.25) scale(0.8800,1)" font-size="16.8" fill="#e8e8e8" stroke="#e8e8e8" stroke-width="0.3">Bus 06</text>
<text transform="translate(737.99,288.80) scale(0.8800,1)" font-size="16.8" fill="#e8e8e8" stroke="#e8e8e8" stroke-width="0.3">Bus 07</text>
<text transform="translate(737.99,315.35) scale(0.8800,1)" font-size="16.8" fill="#e8e8e8" stroke="#e8e8e8" stroke-width="0.3">Bus 08</text>
<text transform="translate(737.99,345.70) scale(0.8800,1)" font-size="16.8" fill="#e8e8e8" stroke="#e8e8e8" stroke-width="0.3">Bus 09</text>
<text transform="translate(737.99,372.05) scale(0.8800,1)" font-size="16.8" fill="#e8e8e8" stroke="#e8e8e8" stroke-width="0.3">Bus 10</text>
<text transform="translate(737.99,398.40) scale(0.8800,1)" font-size="16.8" fill="#e8e8e8" stroke="#e8e8e8" stroke-width="0.3">Bus 11</text>
<text transform="translate(737.99,424.75) scale(0.8800,1)" font-size="16.8" fill="#e8e8e8" stroke="#e8e8e8" stroke-width="0.3">Bus 12</text>
<text transform="translate(737.99,451.10) scale(0.8800,1)" font-size="16.8" fill="#e8e8e8" stroke="#e8e8e8" stroke-width="0.3">Bus 13</text>
<text transform="translate(737.99,477.45) scale(0.8800,1)" font-size="16.8" fill="#e8e8e8" stroke="#e8e8e8" stroke-width="0.3">Bus 14</text>
<text transform="translate(737.99,503.80) scale(0.8800,1)" font-size="16.8" fill="#e8e8e8" stroke="#e8e8e8" stroke-width="0.3">Bus 15</text>
<text transform="translate(737.99,530.15) scale(0.8800,1)" font-size="16.8" fill="#e8e8e8" stroke="#e8e8e8" stroke-width="0.3">Bus 16</text>
<text transform="translate(922.15,196.30) scale(0.9100,1)" font-size="16.8" fill="#e8e8e8" stroke="#e8e8e8" stroke-width="0.12">MUTE</text>
<text transform="translate(899.91,305.00) scale(1.1566,1)" font-size="12.4" fill="#aeb2b6" stroke="#aeb2b6" stroke-width="0.1">10</text>
<text transform="translate(900.43,327.85) scale(1.1396,1)" font-size="12.4" fill="#aeb2b6" stroke="#aeb2b6" stroke-width="0.1">5</text>
<text transform="translate(900.45,350.70) scale(1.1303,1)" font-size="12.4" fill="#aeb2b6" stroke="#aeb2b6" stroke-width="0.1">0</text>
<text transform="translate(900.43,373.55) scale(1.1396,1)" font-size="12.4" fill="#aeb2b6" stroke="#aeb2b6" stroke-width="0.1">5</text>
<text transform="translate(899.91,396.40) scale(1.1566,1)" font-size="12.4" fill="#aeb2b6" stroke="#aeb2b6" stroke-width="0.1">10</text>
<text transform="translate(900.30,419.25) scale(1.1274,1)" font-size="12.4" fill="#aeb2b6" stroke="#aeb2b6" stroke-width="0.1">20</text>
<text transform="translate(900.47,442.10) scale(1.1141,1)" font-size="12.4" fill="#aeb2b6" stroke="#aeb2b6" stroke-width="0.1">30</text>
<text transform="translate(900.45,464.95) scale(1.1162,1)" font-size="12.4" fill="#aeb2b6" stroke="#aeb2b6" stroke-width="0.1">50</text>
<text transform="translate(917.05,535.40) scale(0.8959,1)" font-size="16.5" fill="#e8e8e8" stroke="#e8e8e8" stroke-width="0.3">CH 03</text></g>
</svg></body></html>
